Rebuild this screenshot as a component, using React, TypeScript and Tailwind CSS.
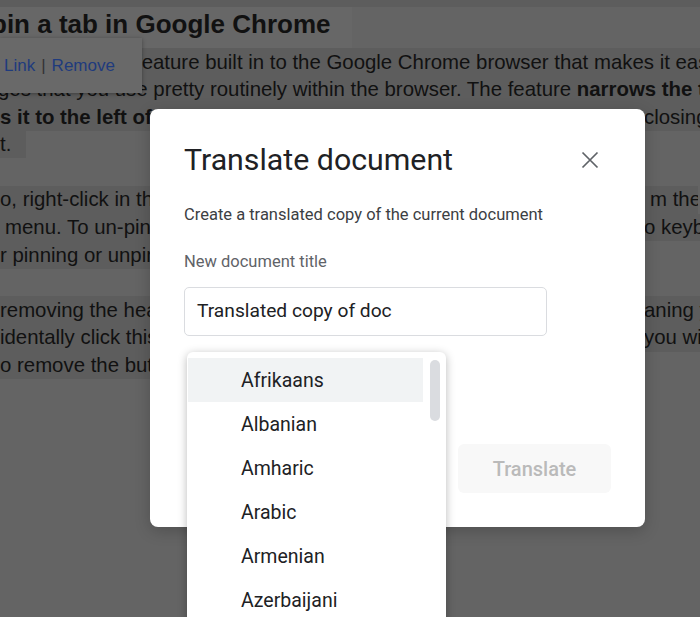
import React from "react";

const band = "bg-[#5d5d5d]";

function Line({
  children,
  w = "w-[700px]",
  bg = true,
}: {
  children?: React.ReactNode;
  w?: string;
  bg?: boolean;
}) {
  return (
    <div
      className={`flex h-[27.6px] shrink-0 items-center overflow-hidden whitespace-nowrap ${w} ${
        bg ? band : ""
      }`}
    >
      {children}
    </div>
  );
}

function Split({ left, right, rightPad = "ml-[-6px]" }: { left: React.ReactNode; right: React.ReactNode; rightPad?: string }) {
  return (
    <>
      <span className="w-[650px] shrink-0 overflow-hidden">{left}</span>
      <span className={rightPad}>{right}</span>
    </>
  );
}

const languages = ["Afrikaans", "Albanian", "Amharic", "Arabic", "Armenian", "Azerbaijani", "Basque"];

export default function App() {
  return (
    <div className="relative h-[617px] w-[700px] overflow-hidden bg-[#646464] font-['Liberation_Sans',Arial,sans-serif] text-[#111]">
      {/* Background article */}
      <div className="flex flex-col">
        <div className={`h-[7px] w-[700px] ${band}`} />
        <div className="flex h-[41px] w-[352px] items-center overflow-hidden whitespace-nowrap bg-[#676767]">
          <h1 className="ml-[-9px] mt-[-6px] text-[26px] font-bold">pin a tab in Google Chrome</h1>
        </div>
        <div className="flex flex-col text-[20.4px]">
          <Line>
            <span className="pl-[136px]">feature built in to the Google Chrome browser that makes it easy to</span>
          </Line>
          <Line>
            <span className="ml-[-2px]">
              ges that you use pretty routinely within the browser. The feature <b>narrows the tab</b>
            </span>
          </Line>
          <Line>
            <Split left={<b>s it to the left of the tab bar</b>} right="closing it" />
          </Line>
          <Line w="w-[26px]">
            <span>t.</span>
          </Line>
          <Line bg={false} />
          <Line w="w-[698px]">
            <Split left="o, right-click in the tab and select Pin from" right="m the" rightPad="ml-0" />
          </Line>
          <Line>
            <Split left={<span className="pl-[5px]">menu. To un-pin, right-click and select Unpin. There is n</span>} right="o keyboard" />
          </Line>
          <Line w="w-[520px]">
            <span>r pinning or unpinning a tab.</span>
          </Line>
          <Line bg={false} />
          <Line>
            <Split left="removing the header from a pinned tab, me" right="aning you" />
          </Line>
          <Line>
            <Split left="identally click this button on a pinned tab, " right="you will" />
          </Line>
          <Line w="w-[520px]">
            <span>o remove the button from pinned tabs.</span>
          </Line>
        </div>
      </div>

      {/* Link popup */}
      <div className="absolute left-0 top-[38px] flex h-[55px] w-[142px] items-center bg-[#696969] pl-[4px] text-[17px] shadow-[0_1px_4px_rgba(0,0,0,0.35)]">
        <span className="text-[#1f3b7d]">Link</span>
        <span className="mx-[6px] text-[#333]">|</span>
        <span className="text-[#1f3b7d]">Remove</span>
      </div>

      {/* Modal */}
      <div className="absolute left-[150px] top-[109px] flex h-[418px] w-[495px] flex-col rounded-[8px] bg-white px-[34px] font-['Roboto',Arial,sans-serif] shadow-[0_4px_16px_rgba(0,0,0,0.2)]">
        <div className="mt-[31px] flex items-center justify-between">
          <h2 className="text-[30.3px] leading-[40px] text-[#202124]">Translate document</h2>
          <button className="mr-[9px] flex h-[24px] w-[24px] items-center justify-center text-[#5f6368]">
            <svg width="18" height="18" viewBox="0 0 18 18" fill="none" stroke="currentColor" strokeWidth="1.7">
              <path d="M1.5 1.5 L16.5 16.5 M16.5 1.5 L1.5 16.5" />
            </svg>
          </button>
        </div>
        <p className="mt-[24px] text-[16.5px] leading-[22px] text-[#3c4043]">Create a translated copy of the current document</p>
        <p className="mt-[25px] text-[16.5px] leading-[22px] text-[#5f6368]">New document title</p>
        <div className="mt-[14px] flex h-[49px] w-[363px] items-center rounded-[5px] border border-[#dadce0] pl-[12px] text-[19.2px] text-[#202124]">
          Translated copy of doc
        </div>
        <div className="mt-[108px] flex justify-end">
          <button className="flex h-[49px] w-[153px] items-center justify-center rounded-[6px] bg-[#f8f8f8] text-[20px] font-medium text-[#bababa]">
            Translate
          </button>
        </div>
      </div>

      {/* Dropdown */}
      <div className="absolute left-[187px] top-[352px] h-[290px] w-[259px] rounded-[6px] bg-white pt-[6px] font-['Roboto',Arial,sans-serif] shadow-[0_2px_10px_rgba(0,0,0,0.28)]">
        <div className="absolute right-[6px] top-[8px] h-[61px] w-[10px] rounded-full bg-[#dadce0]" />
        <ul className="flex flex-col">
          {languages.map((l, i) => (
            <li
              key={l}
              className={`ml-[1px] flex h-[44px] w-[235px] items-center pl-[53px] pt-[1px] text-[19.5px] text-[#202124] ${
                i === 0 ? "bg-[#f1f3f4]" : ""
              }`}
            >
              {l}
            </li>
          ))}
        </ul>
      </div>
    </div>
  );
}
